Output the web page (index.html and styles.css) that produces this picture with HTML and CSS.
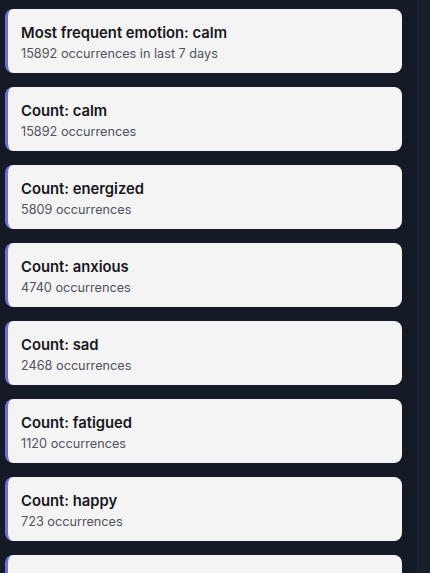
FILE: index.html
```html
<!DOCTYPE html>
<html>
<head>
<meta charset="utf-8">
<link rel="stylesheet" href="styles.css">
</head>
<body>
<div class="page">
  <div class="list">
    <div class="card"><div class="title">Most frequent emotion: calm</div><div class="sub">15892 occurrences in last 7 days</div></div>
    <div class="card"><div class="title">Count: calm</div><div class="sub">15892 occurrences</div></div>
    <div class="card"><div class="title">Count: energized</div><div class="sub">5809 occurrences</div></div>
    <div class="card"><div class="title">Count: anxious</div><div class="sub">4740 occurrences</div></div>
    <div class="card"><div class="title">Count: sad</div><div class="sub">2468 occurrences</div></div>
    <div class="card"><div class="title">Count: fatigued</div><div class="sub">1120 occurrences</div></div>
    <div class="card"><div class="title">Count: happy</div><div class="sub">723 occurrences</div></div>
    <div class="card card-empty"></div>
  </div>
  <div class="rail"></div>
</div>
</body>
</html>
```
FILE: styles.css
```css
html, body {
  margin: 0;
  padding: 0;
  background: #141a26;
  height: 573px;
  overflow: hidden;
}
.page {
  display: flex;
  height: 573px;
  font-family: Inter, "Noto Sans", sans-serif;
}
.list {
  flex: 1;
  display: flex;
  flex-direction: column;
  gap: 14px;
  padding: 9px 15px 0 5px;
}
.rail {
  width: 12px;
  background: #181f2c;
  border-left: 1px solid #1c2331;
}
.card {
  background: #f4f4f5;
  border-left: 3px solid #6b70d8;
  border-radius: 8px;
  padding: 13px 14px 10px 13px;
  flex-shrink: 0;
}
.card-empty {
  height: 64px;
  box-sizing: border-box;
}
.title {
  font-size: 14.8px;
  line-height: 22px;
  font-weight: 600;
  color: #18181b;
}
.sub {
  margin-top: 1px;
  font-size: 12.7px;
  line-height: 18px;
  color: #52525b;
}
```
